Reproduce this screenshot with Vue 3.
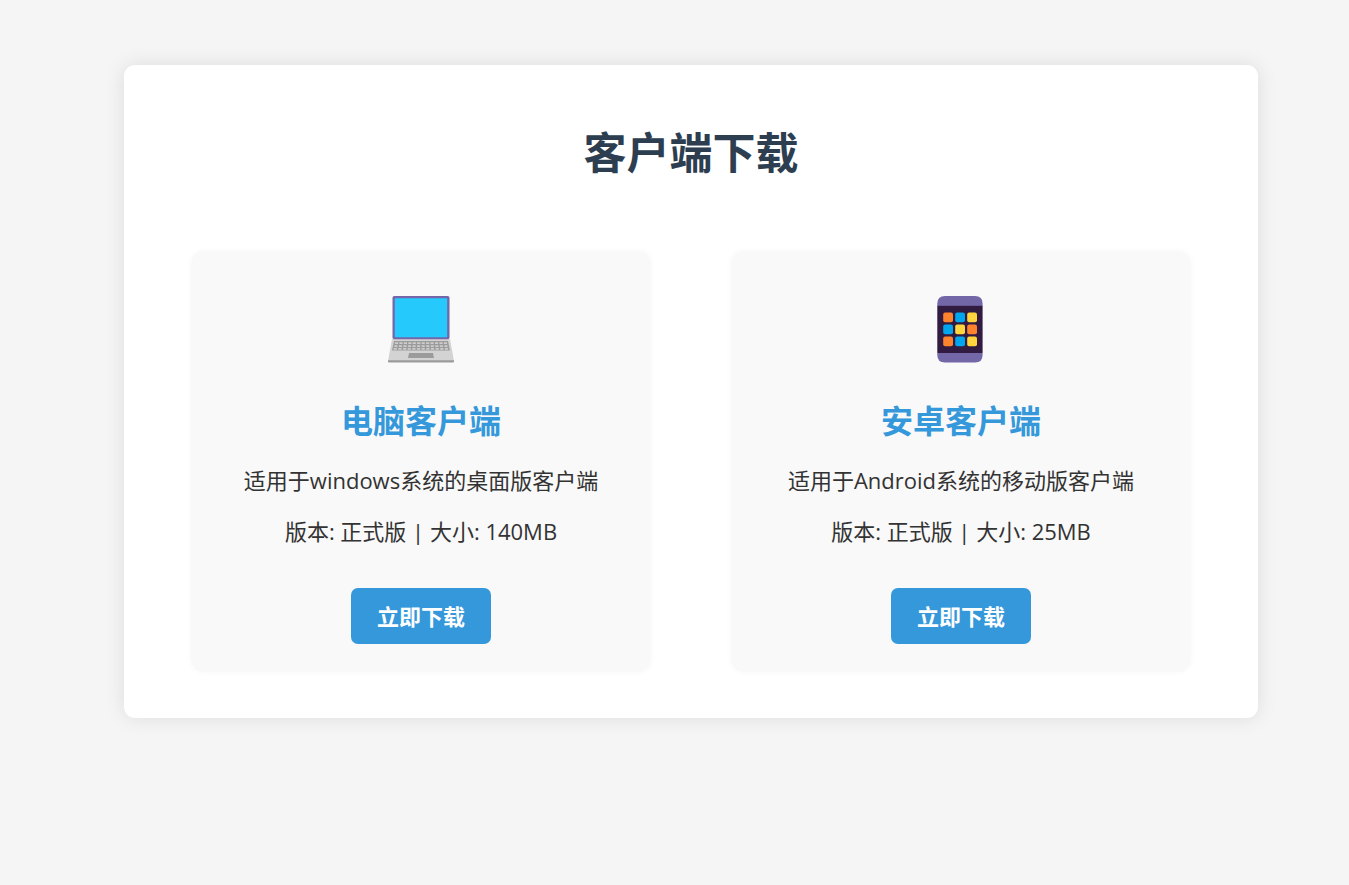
<script setup>
const clients = [
  { id: 'desktop', name: '电脑客户端', desc: '适用于windows系统的桌面版客户端', meta: '版本: 正式版 | 大小: 140MB' },
  { id: 'android', name: '安卓客户端', desc: '适用于Android系统的移动版客户端', meta: '版本: 正式版 | 大小: 25MB' },
]

const palette = { o: '#ff822d', b: '#00a6ed', y: '#ffd43d' }
const tiles = ['o', 'b', 'y', 'b', 'y', 'o', 'o', 'b', 'y'].map((c, i) => ({
  x: 16 + (i % 3) * 12,
  y: 17 + Math.floor(i / 3) * 12,
  fill: palette[c],
}))

const keyRows = [
  { y: 46.3, x: 7.9, step: 4.45 },
  { y: 49.2, x: 7.3, step: 4.55 },
  { y: 52.1, x: 6.7, step: 4.65 },
]
const keyCols = Array.from({ length: 12 }, (_, i) => i)
</script>

<template>
  <main class="page">
    <div class="container">
      <h1>客户端下载</h1>
      <div class="cards">
        <section v-for="c in clients" :key="c.id" class="card">
          <svg v-if="c.id === 'desktop'" class="icon" viewBox="0 0 68 68" aria-hidden="true">
            <path d="M5 43H63L67 65H1Z" fill="#d3d3d3" />
            <rect x="5.500" y="0" width="57" height="43.300" rx="1.800" fill="#7565a9" />
            <rect x="7.800" y="2.200" width="52.400" height="39" rx="0.600" fill="#26c9fc" />
            <path d="M7 45H61L63 54.500H5Z" fill="#9b9b9b" />
            <template v-for="row in keyRows" :key="row.y">
              <rect
                v-for="k in keyCols"
                :key="k"
                :x="row.x + k * row.step"
                :y="row.y"
                width="3.200"
                height="1.700"
                rx="0.300"
                fill="#cdcdcd"
              />
            </template>
            <path d="M22 57H46L47 62H21Z" fill="#9b9b9b" />
            <path d="M1 64.200H67V65.300Q67 66.500 65.800 66.500H2.200Q1 66.500 1 65.300Z" fill="#9b9b9b" />
          </svg>
          <svg v-else class="icon" viewBox="0 0 68 68" aria-hidden="true">
            <path d="M10.300 10V7.500Q10.300 0 18 0H48Q55.600 0 55.600 7.500V10Z" fill="#7367a8" />
            <path d="M10.300 57V59Q10.300 66.500 18 66.500H48Q55.600 66.500 55.600 59V57Z" fill="#7367a8" />
            <rect x="10.300" y="9.800" width="45.300" height="47.200" fill="#321b41" />
            <rect
              v-for="(t, i) in tiles"
              :key="i"
              :x="t.x + 0.2"
              :y="t.y - 0.6"
              width="9.800"
              height="9.800"
              rx="2"
              :fill="t.fill"
            />
          </svg>
          <h2>{{ c.name }}</h2>
          <p>{{ c.desc }}</p>
          <p>{{ c.meta }}</p>
          <a class="download" href="#">立即下载</a>
        </section>
      </div>
    </div>
  </main>
</template>

<style>
body {
  margin: 0;
  background: #f5f5f5;
}
</style>

<style scoped>
.page {
  padding: 65px 91px 65px 124px;
  color: #333;
  font-family: "Open Sans", "Noto Sans CJK SC", sans-serif;
  font-size: 22px;
  line-height: 35px;
}

.container {
  padding: 53px 67px 46px;
  background: #fff;
  border-radius: 11px;
  box-shadow: 0 0 20px rgba(0, 0, 0, 0.1);
  text-align: center;
}

h1 {
  margin: 0 0 63px;
  color: #2c3e50;
  font-size: 43px;
  line-height: 70px;
}

.cards {
  display: grid;
  grid-template-columns: 1fr 1fr;
  gap: 80px;
}

.card {
  display: flex;
  flex-direction: column;
  align-items: center;
  padding: 45px 27px 28px;
  background: #f9f9f9;
  border-radius: 13px;
  box-shadow: 0 0 7px rgba(0, 0, 0, 0.03);
}

.icon {
  width: 68px;
  height: 68px;
}

h2 {
  margin: 31px 0 16px;
  color: #3498db;
  font-size: 32px;
  line-height: 52px;
}

p {
  margin: 0 0 16px;
}

.download {
  margin-top: 23px;
  padding: 11px 26px 10px;
  border-radius: 7px;
  background: #3498db;
  color: #fff;
  font-weight: 700;
  text-decoration: none;
}
</style>
